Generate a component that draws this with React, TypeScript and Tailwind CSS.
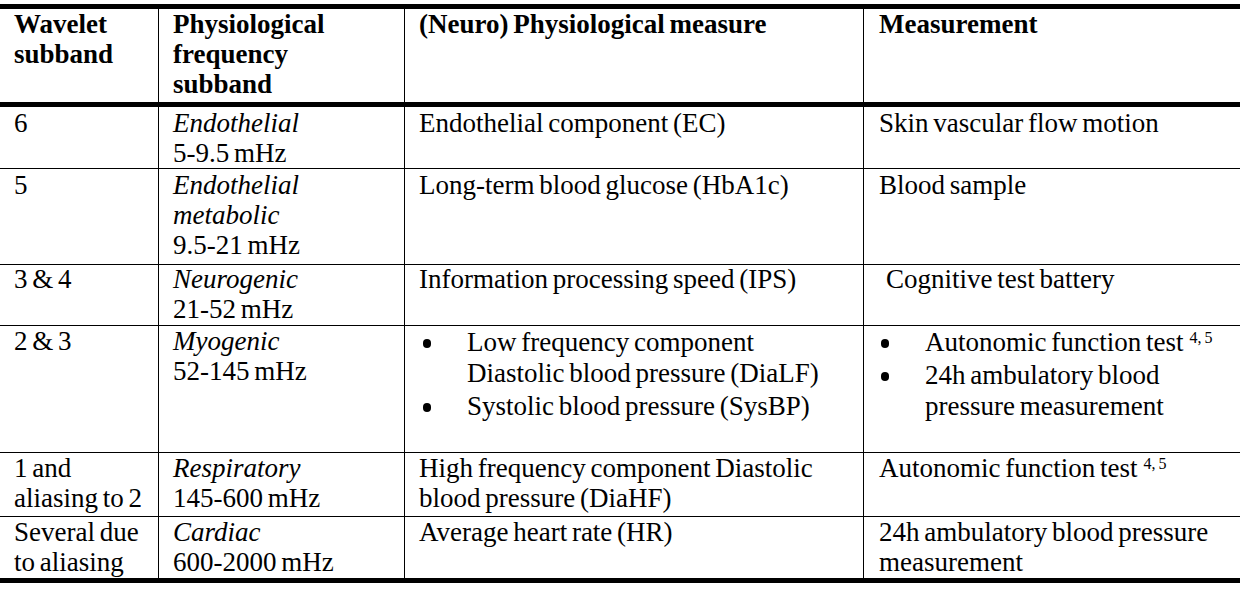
const cols = "grid grid-cols-[158px_246px_459px_1fr]";

const Bullet = ({ children }: { children: React.ReactNode }) => (
  <div className="flex leading-[31px]">
    <span className="w-[48px] shrink-0 pl-[4px] pt-[12px]">
      <span className="block w-[8px] h-[9px] rounded-full bg-black" />
    </span>
    <span>{children}</span>
  </div>
);

const Refs = () => (
  <sup className="text-[16px] ml-[6px]">
    4,<span className="ml-[3px]">5</span>
  </sup>
);

type RowProps = {
  h: string;
  pad: string;
  last?: boolean;
  cells: React.ReactNode[];
};

const Row = ({ h, pad, last, cells }: RowProps) => (
  <div className={`${cols} ${h} ${last ? "" : "border-b border-black"}`}>
    {cells.map((c, i) => (
      <div
        key={i}
        className={`${i === 0 ? "pl-[14px]" : i === 3 ? "border-l border-black pl-[15px]" : "border-l border-black pl-[14px]"} pr-2`}
      >
        <div className={pad}>{c}</div>
      </div>
    ))}
  </div>
);

export default function App() {
  return (
    <div className="w-[1240px] h-[590px] bg-white pt-[4px] text-black text-[27px] leading-[30px] whitespace-nowrap font-['Liberation_Serif','Times_New_Roman',serif] [word-spacing:-2px]">
      <div className="border-t-[5px] border-b-[5px] border-black">
        <div className={`${cols} h-[98px] border-b-[5px] border-black font-bold`}>
          <div className="pl-[14px]">
            Wavelet
            <br />
            subband
          </div>
          <div className="border-l border-black pl-[14px]">
            Physiological
            <br />
            frequency
            <br />
            subband
          </div>
          <div className="border-l border-black pl-[14px]">(Neuro) Physiological measure</div>
          <div className="border-l border-black pl-[15px]">Measurement</div>
        </div>

        <Row
          h="h-[62px]"
          pad="pt-px"
          cells={[
            "6",
            <>
              <i>Endothelial</i>
              <br />
              5-9.5 mHz
            </>,
            "Endothelial component (EC)",
            "Skin vascular flow motion",
          ]}
        />

        <Row
          h="h-[96px]"
          pad="pt-px"
          cells={[
            "5",
            <>
              <i>Endothelial</i>
              <br />
              <i>metabolic</i>
              <br />
              9.5-21 mHz
            </>,
            "Long-term blood glucose (HbA1c)",
            "Blood sample",
          ]}
        />

        <Row
          h="h-[61px]"
          pad="-mt-px"
          cells={[
            "3 & 4",
            <>
              <i>Neurogenic</i>
              <br />
              21-52 mHz
            </>,
            "Information processing speed (IPS)",
            <span className="pl-[7px]">Cognitive test battery</span>,
          ]}
        />

        <Row
          h="h-[127px]"
          pad="pt-0"
          cells={[
            "2 & 3",
            <>
              <i>Myogenic</i>
              <br />
              52-145 mHz
            </>,
            <div className="flex flex-col gap-[2px] pt-px">
              <Bullet>
                Low frequency component
                <br />
                Diastolic blood pressure (DiaLF)
              </Bullet>
              <Bullet>Systolic blood pressure (SysBP)</Bullet>
            </div>,
            <div className="flex flex-col gap-[2px] pt-px -ml-[2px]">
              <Bullet>
                Autonomic function test
                <Refs />
              </Bullet>
              <Bullet>
                24h ambulatory blood
                <br />
                pressure measurement
              </Bullet>
            </div>,
          ]}
        />

        <Row
          h="h-[64px]"
          pad="pt-0"
          cells={[
            <>
              1 and
              <br />
              aliasing to 2
            </>,
            <>
              <i>Respiratory</i>
              <br />
              145-600 mHz
            </>,
            <>
              High frequency component Diastolic
              <br />
              blood pressure (DiaHF)
            </>,
            <>
              Autonomic function test
              <Refs />
            </>,
          ]}
        />

        <Row
          h="h-[61px]"
          pad="pt-0"
          last
          cells={[
            <>
              Several due
              <br />
              to aliasing
            </>,
            <>
              <i>Cardiac</i>
              <br />
              600-2000 mHz
            </>,
            "Average heart rate (HR)",
            <>
              24h ambulatory blood pressure
              <br />
              measurement
            </>,
          ]}
        />
      </div>
    </div>
  );
}
